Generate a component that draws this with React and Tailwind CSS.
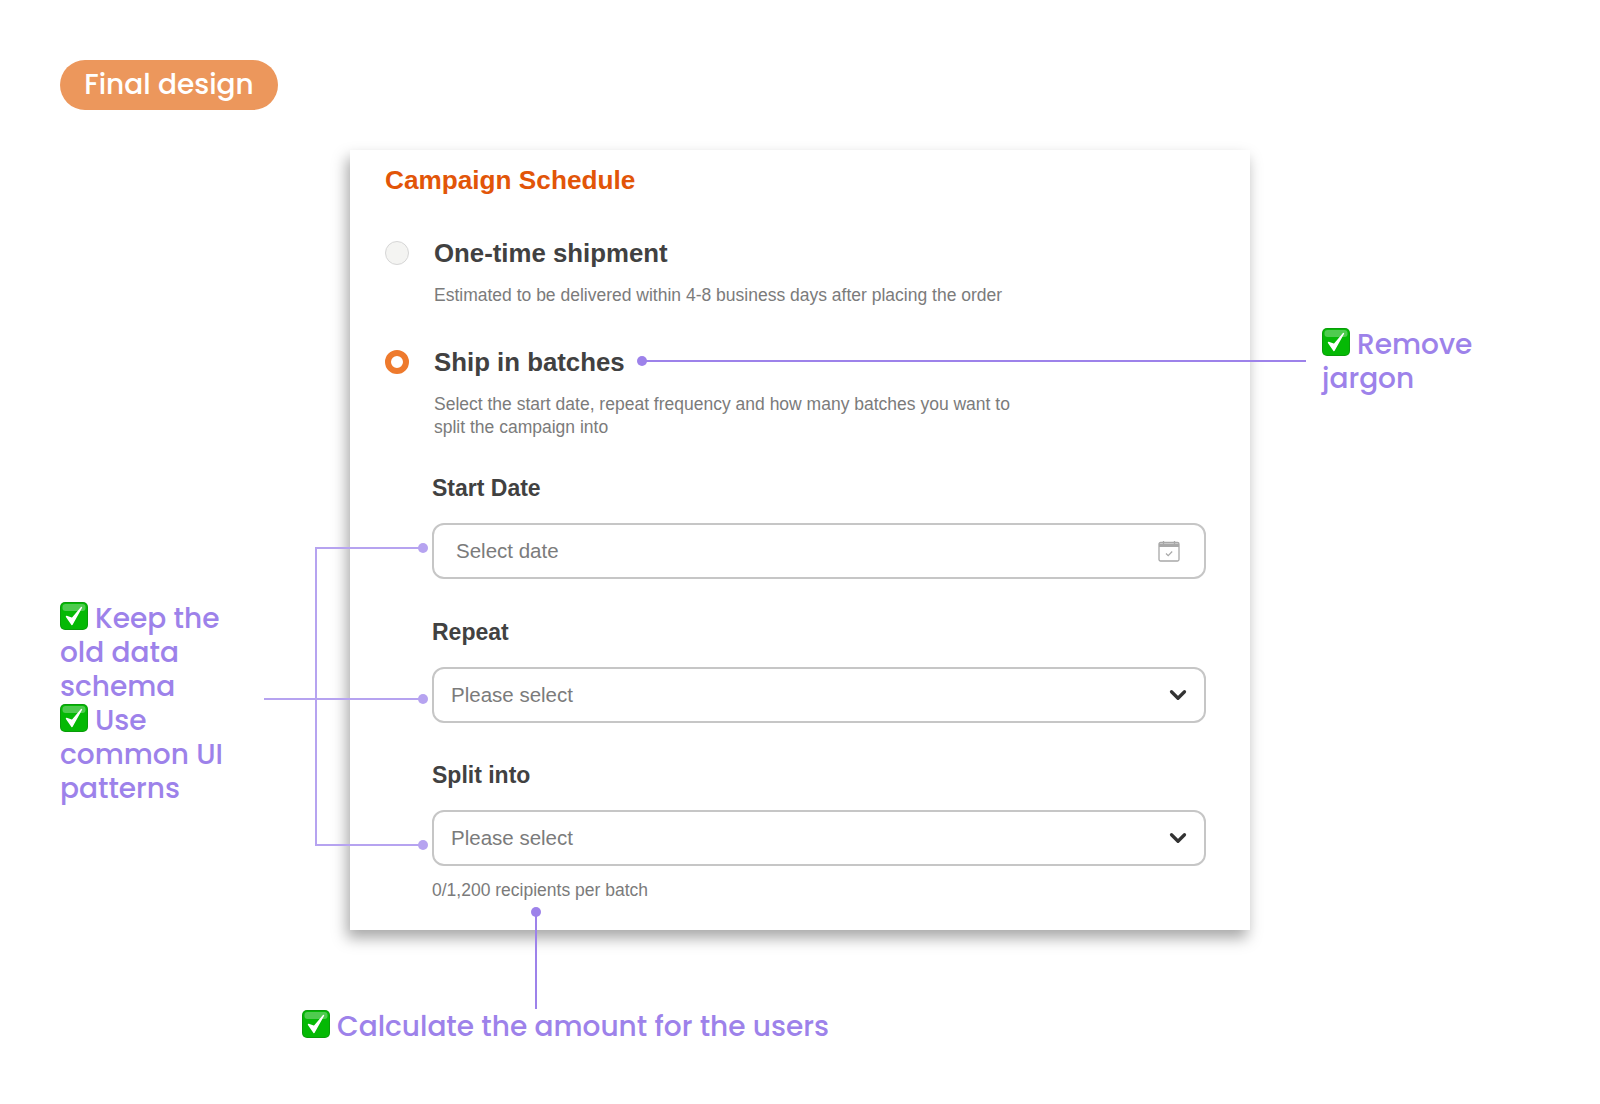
import { ChevronDown } from 'lucide-react';

const CheckEmoji = () => (
  <svg viewBox="0 0 28 28" className="inline-block w-[28px] h-[28px] mr-[7px] align-[-2px]">
    <rect x="0" y="0" width="28" height="28" rx="5" fill="#0a9c0a" />
    <rect x="1" y="1" width="26" height="26" rx="4" fill="#05b905" />
    <rect x="2.5" y="2" width="23" height="7" rx="3" fill="#4fcb4f" />
    <path d="M6.5 14.5 L12 22.5 L21.5 5.5 L12.2 16.5 Z" fill="#fff" stroke="#fff" strokeWidth="1.4" strokeLinejoin="round" />
  </svg>
);

const CalendarIcon = () => (
  <svg viewBox="0 0 22 22" className="w-[22px] h-[22px]" fill="none">
    <rect x="1" y="2.5" width="20" height="18.5" rx="1.5" stroke="#a8a8a8" strokeWidth="1.3" />
    <path d="M1 3.5 h20 v3.5 h-20 z" fill="#a8a8a8" />
    <path d="M5.5 1 v3 M16.5 1 v3" stroke="#a8a8a8" strokeWidth="1.3" />
    <path d="M8 13.5 l2.2 2.2 l4-4.2" stroke="#a8a8a8" strokeWidth="1.2" />
  </svg>
);

const Radio = ({ active }) =>
  active ? (
    <span className="w-[24px] h-[24px] shrink-0 rounded-full border-[6px] border-[#ee7a2d] bg-white" />
  ) : (
    <span className="w-[24px] h-[24px] shrink-0 rounded-full border border-[#d6d6d6] bg-[#f4f4f2]" />
  );

const Option = ({ active, title, children, className }) => (
  <div className={className}>
    <div className="flex items-center h-[32px] gap-[25px]">
      <Radio active={active} />
      <span className="text-[25.8px] font-bold text-[#414141]">{title}</span>
    </div>
    <p className="mt-[15px] ml-[49px] text-[17.5px] leading-[23px] text-[#7b7b7b]">{children}</p>
  </div>
);

const Field = ({ label, placeholder, icon, pad, className }) => (
  <div className={className}>
    <div className="text-[23px] leading-[28px] font-bold text-[#414141]">{label}</div>
    <div className={`mt-[21px] h-[56px] rounded-[12px] border-2 border-[#c6c6c6] flex items-center justify-between ${pad}`}>
      <span className="text-[20.5px] text-[#7b7b7b]">{placeholder}</span>
      {icon}
    </div>
  </div>
);

const Note = ({ className, children }) => (
  <div className={`absolute font-['Poppins','Inter',sans-serif] text-[28px] font-medium text-[#9d82ea] ${className}`}>
    {children}
  </div>
);

const Line = ({ check, children }) => (
  <div className="h-[34px] leading-[34px] whitespace-nowrap">
    {check && <CheckEmoji />}
    {children}
  </div>
);

const Dot = ({ className }) => <span className={`absolute w-[10px] h-[10px] rounded-full ${className}`} />;

export default function App() {
  const chevron = <ChevronDown className="w-[26px] h-[26px] text-[#333333]" strokeWidth={3} />;

  return (
    <div className="relative w-[1600px] h-[1104px] bg-white overflow-hidden font-['Liberation_Sans',sans-serif]">
      <div className="ml-[60px] pt-[60px]">
        <div className="w-[218px] h-[50px] rounded-full bg-[#ec975c] text-white text-[28px] font-medium font-['Poppins','Inter',sans-serif] flex items-center justify-center">
          Final design
        </div>
      </div>

      <div className="ml-[350px] mt-[40px] w-[900px] h-[780px] bg-white shadow-[-3px_8px_14px_rgba(0,0,0,0.35)] px-[35px]">
        <h1 className="pt-[13px] text-[26.2px] leading-[34px] font-bold text-[#e25508]">Campaign Schedule</h1>
        <Option className="mt-[40px]" title="One-time shipment">
          Estimated to be delivered within 4-8 business days after placing the order
        </Option>
        <Option className="mt-[39px]" active title="Ship in batches">
          Select the start date, repeat frequency and how many batches you want to
          <br />
          split the campaign into
        </Option>
        <div className="ml-[47px] mr-[9px]">
          <Field className="mt-[35px]" label="Start Date" placeholder="Select date" pad="pl-[22px] pr-[24px]" icon={<CalendarIcon />} />
          <Field className="mt-[39px]" label="Repeat" placeholder="Please select" pad="pl-[17px] pr-[13px]" icon={chevron} />
          <Field className="mt-[38px]" label="Split into" placeholder="Please select" pad="pl-[17px] pr-[13px]" icon={chevron} />
          <p className="mt-[13px] text-[17.5px] leading-[23px] text-[#7b7b7b]">0/1,200 recipients per batch</p>
        </div>
      </div>

      {/* connector lines */}
      <div className="absolute left-[640px] top-[360px] w-[666px] h-[2px] bg-[#9d82ea]" />
      <Dot className="left-[637px] top-[356px] bg-[#9d82ea]" />

      <div className="absolute left-[315px] top-[547px] w-[108px] h-[299px] border-2 border-r-0 border-[#b6a3f0]" />
      <div className="absolute left-[264px] top-[698px] w-[160px] h-[2px] bg-[#b6a3f0]" />
      <Dot className="left-[418px] top-[543px] bg-[#b6a3f0]" />
      <Dot className="left-[418px] top-[694px] bg-[#b6a3f0]" />
      <Dot className="left-[418px] top-[840px] bg-[#b6a3f0]" />

      <div className="absolute left-[535px] top-[912px] w-[2px] h-[97px] bg-[#9d82ea]" />
      <Dot className="left-[531px] top-[907px] bg-[#9d82ea]" />

      {/* annotations */}
      <Note className="left-[1322px] top-[328px]">
        <Line check>Remove</Line>
        <Line>jargon</Line>
      </Note>
      <Note className="left-[60px] top-[602px]">
        <Line check>Keep the</Line>
        <Line>old data</Line>
        <Line>schema</Line>
        <Line check>Use</Line>
        <Line>common UI</Line>
        <Line>patterns</Line>
      </Note>
      <Note className="left-[302px] top-[1010px]">
        <Line check>Calculate the amount for the users</Line>
      </Note>
    </div>
  );
}
